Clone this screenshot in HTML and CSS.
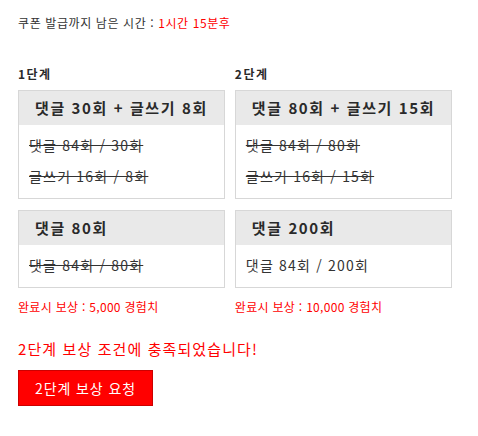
FILE: index.html
```html
<!DOCTYPE html>
<html lang="ko">
<head>
<meta charset="utf-8">
<link rel="stylesheet" href="styles.css">
</head>
<body>
<div class="page">
  <p class="timer">쿠폰 발급까지 남은 시간 : <span class="red">1시간 15분후</span></p>
  <div class="stages">
    <div class="stage">
      <h3 class="stage-title">1단계</h3>
      <div class="box">
        <div class="box-head">댓글 30회 + 글쓰기 8회</div>
        <div class="box-body">
          <p class="line done">댓글 84회 / 30회</p>
          <p class="line done">글쓰기 16회 / 8회</p>
        </div>
      </div>
      <div class="box">
        <div class="box-head">댓글 80회</div>
        <div class="box-body">
          <p class="line done">댓글 84회 / 80회</p>
        </div>
      </div>
      <p class="reward">완료시 보상 : 5,000 경험치</p>
    </div>
    <div class="stage">
      <h3 class="stage-title">2단계</h3>
      <div class="box">
        <div class="box-head">댓글 80회 + 글쓰기 15회</div>
        <div class="box-body">
          <p class="line done">댓글 84회 / 80회</p>
          <p class="line done">글쓰기 16회 / 15회</p>
        </div>
      </div>
      <div class="box">
        <div class="box-head">댓글 200회</div>
        <div class="box-body">
          <p class="line">댓글 84회 / 200회</p>
        </div>
      </div>
      <p class="reward">완료시 보상 : 10,000 경험치</p>
    </div>
  </div>
  <p class="notice">2단계 보상 조건에 충족되었습니다!</p>
  <button class="claim" type="button">2단계 보상 요청</button>
</div>
</body>
</html>
```

FILE: styles.css
```css
* { box-sizing: border-box; }
html, body { margin: 0; padding: 0; background: #fff; }
body {
  font-family: "Noto Sans CJK KR", "Noto Sans", sans-serif;
  color: #333;
}
.page { padding: 15px 18px 0 18px; }
.timer {
  margin: 0;
  font-size: 12px;
  line-height: 16px;
  letter-spacing: 0.6px;
  color: #333;
}
.red { color: #f00; }
.stages {
  display: flex;
  align-items: flex-start;
  gap: 10px;
  margin-top: 35px;
}
.stage { flex: none; }
.stage-title {
  margin: 0 0 8px;
  font-size: 12px;
  line-height: 16px;
  font-weight: bold;
  letter-spacing: 1.5px;
  color: #2a2a2a;
}
.box {
  border: 1px solid #d7d7d7;
  margin-bottom: 11px;
}
.box-head {
  background: #e9e9e9;
  height: 34px;
  line-height: 33px;
  padding: 0 16px 0 16px;
  font-size: 15px;
  font-weight: bold;
  color: #2a2a2a;
  letter-spacing: 1.6px;
  white-space: nowrap;
}
.box-body { padding: 5px 10px 6px; }
.line {
  margin: 0;
  font-size: 14px;
  line-height: 31px;
  height: 31px;
  color: #333;
  letter-spacing: 1.2px;
  white-space: nowrap;
}
.line.done { text-decoration: line-through; }
.reward {
  margin: 0;
  font-size: 12px;
  line-height: 16px;
  letter-spacing: 0.3px;
  color: #f00;
}
.notice {
  margin: 24px 0 0;
  font-size: 15px;
  line-height: 20px;
  letter-spacing: 1.1px;
  color: #f00;
}
.claim {
  display: block;
  margin-top: 11px;
  width: 135px;
  height: 36px;
  background: #f00;
  border: 1px solid #c00;
  color: #fff;
  font-family: inherit;
  font-size: 14px;
  letter-spacing: 0.9px;
  padding: 0;
}
```
